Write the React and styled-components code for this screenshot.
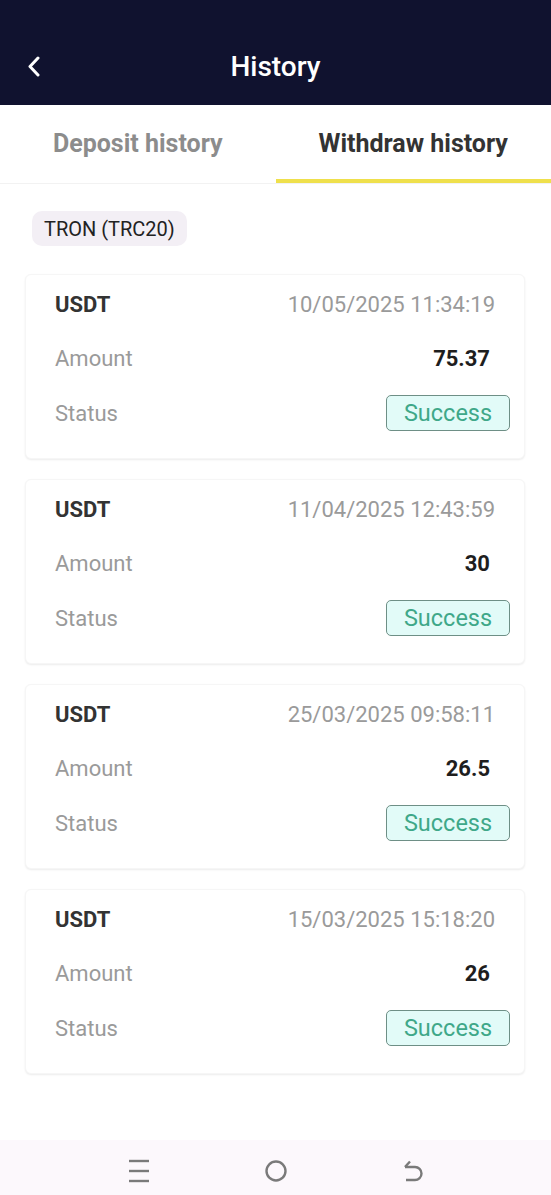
import React from "react";
import styled, { createGlobalStyle } from "styled-components";

const GlobalStyle = createGlobalStyle`
  body {
    margin: 0;
    background: #fff;
    font-family: Roboto, "Liberation Sans", sans-serif;
  }
`;

const records = [
  { coin: "USDT", time: "10/05/2025 11:34:19", amount: "75.37", status: "Success" },
  { coin: "USDT", time: "11/04/2025 12:43:59", amount: "30", status: "Success" },
  { coin: "USDT", time: "25/03/2025 09:58:11", amount: "26.5", status: "Success" },
  { coin: "USDT", time: "15/03/2025 15:18:20", amount: "26", status: "Success" },
];

const Page = styled.div`
  min-height: 1195px;
  display: flex;
  flex-direction: column;
`;

const Header = styled.header`
  height: 105px;
  box-sizing: border-box;
  padding-top: 40px;
  background: #10122f;
`;

const TitleRow = styled.div`
  height: 52px;
  display: grid;
  grid-template-columns: 60px 1fr 60px;
  align-items: center;
`;

const BackButton = styled.button`
  border: 0;
  background: none;
  padding: 0 0 0 27px;
  display: flex;
  align-items: center;
  height: 100%;
  cursor: pointer;
`;

const Title = styled.h1`
  margin: 0;
  text-align: center;
  color: #fff;
  font-size: 28px;
  font-weight: 500;
`;

const Tabs = styled.nav`
  display: grid;
  grid-template-columns: 1fr 1fr;
  height: 78px;
  border-bottom: 1px solid #f2f2f2;
`;

const Tab = styled.div`
  display: flex;
  align-items: center;
  justify-content: center;
  padding-top: 2px;
  font-size: 25px;
  font-weight: 700;
  color: ${(p) => (p.$active ? "#333" : "#8c8c8c")};
  border-bottom: 4px solid ${(p) => (p.$active ? "#efe04c" : "transparent")};
`;

const Content = styled.main`
  padding: 27px 26px 0 25px;
`;

const Chip = styled.span`
  display: inline-flex;
  align-items: center;
  height: 35px;
  padding: 0 12px;
  margin-left: 7px;
  border-radius: 10px;
  background: #f3eff5;
  color: #222;
  font-size: 20px;
`;

const CardList = styled.div`
  margin-top: 28px;
  display: flex;
  flex-direction: column;
  gap: 20px;
`;

const Card = styled.section`
  height: 185px;
  box-sizing: border-box;
  padding: 12px 29px 27px;
  display: flex;
  flex-direction: column;
  gap: 19px;
  border-radius: 6px;
  background: #fff;
  border: 1px solid #f6f6f6;
  box-shadow: 0 1px 2px rgba(0, 0, 0, 0.08);
`;

const Row = styled.div`
  height: 36px;
  display: flex;
  align-items: center;
  justify-content: space-between;
  font-size: 22px;
  & + & {
    margin-top: ${(p) => p.$extra || 0}px;
  }
`;

const Coin = styled.span`
  font-weight: 700;
  color: #333;
`;

const Muted = styled.span`
  color: #9a9a9a;
`;

const Amount = styled.span`
  font-weight: 700;
  color: #1e1e1e;
  margin-right: 5px;
`;

const Badge = styled.span`
  width: 124px;
  height: 36px;
  box-sizing: border-box;
  margin-right: -15px;
  display: flex;
  align-items: center;
  justify-content: center;
  border: 1.5px solid #6e8f86;
  border-radius: 5px;
  background: #e2fbf8;
  color: #3fa889;
  font-size: 23.5px;
`;

const NavBar = styled.footer`
  margin-top: auto;
  height: 55px;
  box-sizing: border-box;
  padding-top: 6px;
  background: #fcf8fc;
  display: flex;
  align-items: center;
  justify-content: center;
  gap: 115px;
`;

const NavIcon = styled.svg`
  width: 22px;
  height: 24px;
  stroke: #7a7a7a;
  fill: none;
  stroke-width: 2.4;
`;

const Chevron = () => (
  <svg width="14" height="21" viewBox="0 0 14 21">
    <polyline points="11,2 3,10.5 11,19" fill="none" stroke="#fff" strokeWidth="3" strokeLinecap="round" strokeLinejoin="round" />
  </svg>
);

const RecordCard = ({ record }) => (
  <Card>
    <Row>
      <Coin>{record.coin}</Coin>
      <Muted>{record.time}</Muted>
    </Row>
    <Row>
      <Muted>Amount</Muted>
      <Amount>{record.amount}</Amount>
    </Row>
    <Row $extra={1}>
      <Muted>Status</Muted>
      <Badge>{record.status}</Badge>
    </Row>
  </Card>
);

export default function App() {
  return (
    <Page>
      <GlobalStyle />
      <Header>
        <TitleRow>
          <BackButton aria-label="Back">
            <Chevron />
          </BackButton>
          <Title>History</Title>
          <span />
        </TitleRow>
      </Header>
      <Tabs>
        <Tab>Deposit history</Tab>
        <Tab $active>Withdraw history</Tab>
      </Tabs>
      <Content>
        <Chip>TRON (TRC20)</Chip>
        <CardList>
          {records.map((r, i) => (
            <RecordCard key={i} record={r} />
          ))}
        </CardList>
      </Content>
      <NavBar>
        <NavIcon viewBox="0 0 22 24">
          <line x1="1" y1="2" x2="21" y2="2" />
          <line x1="1" y1="12" x2="21" y2="12" />
          <line x1="1" y1="22" x2="21" y2="22" />
        </NavIcon>
        <NavIcon viewBox="0 0 22 24">
          <circle cx="11" cy="12" r="9.5" />
        </NavIcon>
        <NavIcon viewBox="0 0 22 24">
          <path d="M3 8 L8 2.5" />
          <path d="M3 8 H13 a6.5 6.5 0 0 1 0 13 H4" />
        </NavIcon>
      </NavBar>
    </Page>
  );
}
